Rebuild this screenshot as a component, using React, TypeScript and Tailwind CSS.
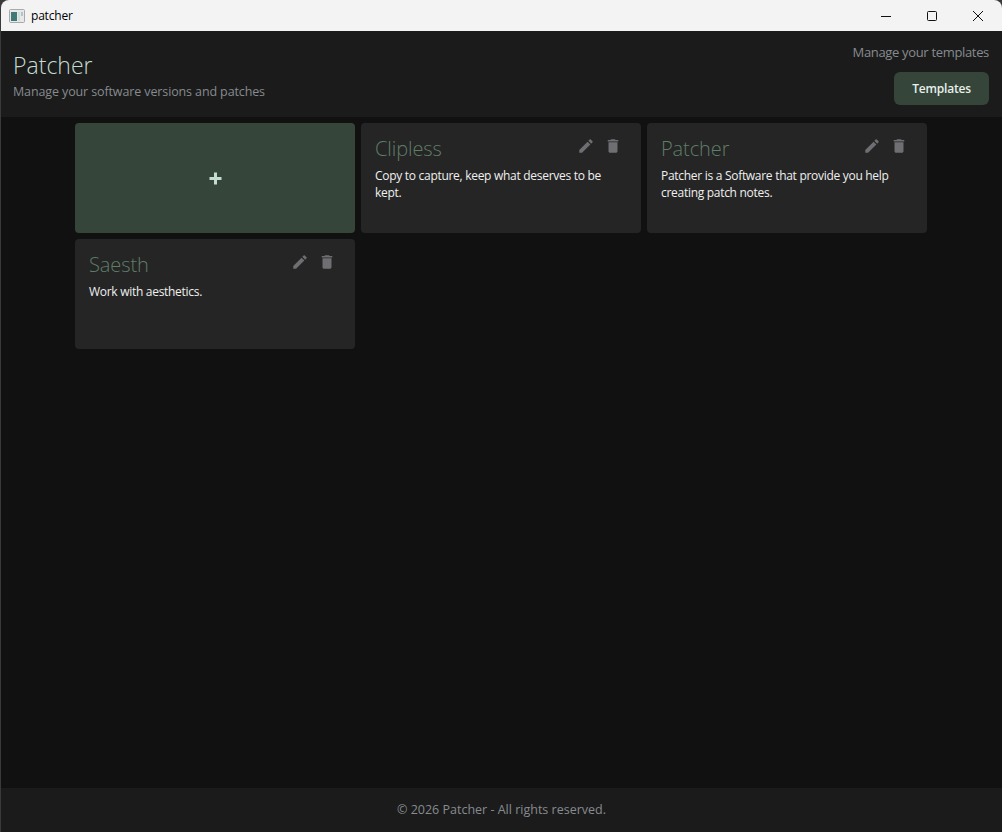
const PROJECTS = [
  { name: 'Clipless', description: 'Copy to capture, keep what deserves to be kept.' },
  { name: 'Patcher', description: 'Patcher is a Software that provide you help creating patch notes.' },
  { name: 'Saesth', description: 'Work with aesthetics.' },
];

function WindowBar() {
  return (
    <div className="flex h-[31px] shrink-0 items-center bg-[#f3f3f3] rounded-t-[8px] pl-[8px] pr-px">
      <svg width="16" height="14" viewBox="0 0 16 14" aria-hidden="true">
        <rect x="0.5" y="0.5" width="15" height="13" rx="1" fill="#e8e8e8" stroke="#a9a9a9" />
        <rect x="2" y="3" width="6" height="9" fill="#3f7a78" />
        <rect x="9" y="3" width="2" height="9" fill="#cfe0dc" />
        <rect x="12" y="3" width="2" height="4" fill="#b5c4c2" />
      </svg>
      <span className="ml-[6px] text-[12px] tracking-[-0.2px] text-black">patcher</span>
      <div className="ml-auto flex h-full">
        <button type="button" className="flex h-full w-[46px] items-center justify-center">
          <svg width="10" height="10" viewBox="0 0 10 10" aria-hidden="true">
            <path d="M0 5.5h10" stroke="#111" />
          </svg>
        </button>
        <button type="button" className="flex h-full w-[46px] items-center justify-center">
          <svg width="10" height="10" viewBox="0 0 10 10" aria-hidden="true">
            <rect x="0.5" y="0.5" width="9" height="9" rx="1" fill="none" stroke="#111" />
          </svg>
        </button>
        <button type="button" className="flex h-full w-[46px] items-center justify-center">
          <svg width="10" height="10" viewBox="0 0 10 10" aria-hidden="true">
            <path d="M0 0l10 10M10 0L0 10" stroke="#111" />
          </svg>
        </button>
      </div>
    </div>
  );
}

function ProjectCard({ name, description }: { name: string; description: string }) {
  return (
    <article className="h-[110px] rounded-[4px] bg-[#252525] pl-[14px] pr-[19px] pt-[12px]">
      <div className="flex items-start justify-between">
        <h2 className="text-[20px] font-light leading-[28px] tracking-[-0.1px] text-[#5f7d69]">{name}</h2>
        <div className="flex gap-[9px] pt-[2px]">
          <svg width="18" height="18" viewBox="0 0 24 24" fill="#6f6f73" aria-hidden="true">
            <path d="M3 17.25V21h3.75L17.81 9.94l-3.75-3.75L3 17.25zM20.71 7.04c.39-.39.39-1.02 0-1.41l-2.34-2.34c-.39-.39-1.02-.39-1.41 0l-1.83 1.83 3.75 3.75 1.83-1.83z" />
          </svg>
          <svg width="18" height="18" viewBox="0 0 24 24" fill="#6f6f73" aria-hidden="true">
            <path d="M6 19c0 1.1.9 2 2 2h8c1.1 0 2-.9 2-2V7H6v12zM19 4h-3.5l-1-1h-5l-1 1H5v2h14V4z" />
          </svg>
        </div>
      </div>
      <p className="mt-[4px] text-[12px] leading-[17px] tracking-[-0.29px] text-[#f0f0f0]">{description}</p>
    </article>
  );
}

export default function App() {
  return (
    <div className="flex h-[832px] w-[1002px] flex-col overflow-hidden bg-[#3a3a3a] pl-px font-['Open_Sans','Noto_Sans',sans-serif]">
      <WindowBar />

      <header className="flex h-[86px] shrink-0 items-start justify-between bg-[#1b1b1b] pl-[12px] pr-[13px]">
        <div className="pt-[18px]">
          <h1 className="text-[23px] font-light leading-[32px] tracking-[0.02px] text-[#c4dcd0]">Patcher</h1>
          <p className="mt-[2px] text-[12.5px] leading-[18px] tracking-[-0.12px] text-[#868b8f]">Manage your software versions and patches</p>
        </div>
        <div className="flex flex-col items-end pt-[12px]">
          <p className="text-[13px] leading-[18px] tracking-[-0.33px] text-[#868b8f]">Manage your templates</p>
          <button
            type="button"
            className="mt-[11px] h-[33px] w-[95px] rounded-[6px] bg-[#35453a] text-[12px] font-semibold tracking-[-0.2px] text-[#e8f0ea]"
          >
            Templates
          </button>
        </div>
      </header>

      <main className="min-h-0 flex-1 bg-[#111111] pt-[6px]">
        <div className="ml-[74px] grid w-[852px] grid-cols-3 gap-[6px]">
          <button
            type="button"
            className="flex h-[110px] items-center justify-center rounded-[4px] bg-[#35453a]"
            aria-label="Add project"
          >
            <svg width="13" height="13" viewBox="0 0 13 13" aria-hidden="true">
              <path d="M6.5 0.5v12M0.5 6.5h12" stroke="#c4dcd0" strokeWidth="3" />
            </svg>
          </button>
          {PROJECTS.map((project) => (
            <ProjectCard key={project.name} name={project.name} description={project.description} />
          ))}
        </div>
      </main>

      <footer className="flex h-[44px] shrink-0 items-center justify-center bg-[#1b1b1b] text-[12.5px] text-[#868b8f]">
        © 2026 Patcher - All rights reserved.
      </footer>
    </div>
  );
}
